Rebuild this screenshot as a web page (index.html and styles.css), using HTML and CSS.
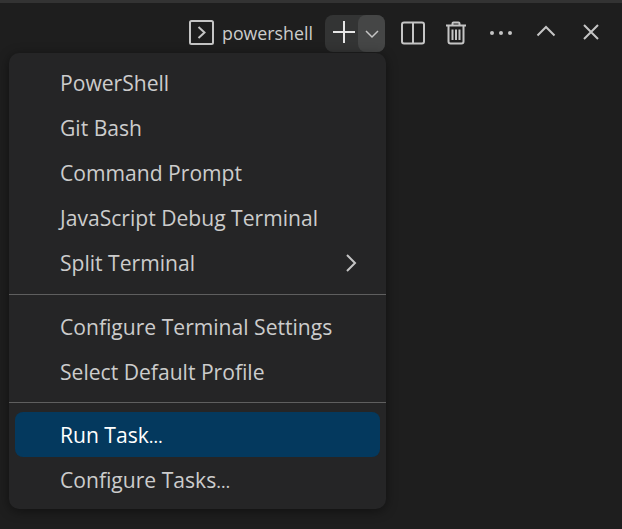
FILE: index.html
```html
<!DOCTYPE html>
<html lang="en">
<head>
<meta charset="utf-8">
<title>Terminal menu</title>
<link rel="stylesheet" href="styles.css">
</head>
<body>
<div class="topline"></div>
<header class="toolbar">
  <svg class="icon term-icon" width="25" height="25" viewBox="0 0 25 25"><rect x="1" y="1" width="23" height="23" rx="1.500"/><path d="M9.500 7l6 5.500-6 5.500"/></svg>
  <span class="profile">powershell</span>
  <div class="add-group">
    <span class="add"><svg class="icon" width="24" height="24" viewBox="0 0 24 24"><path class="bright" d="M12 1v22M1 12h22"/></svg></span>
    <span class="caret"><svg class="icon thin" width="16" height="16" viewBox="0 0 16 16"><path d="M2 5l6 6 6-6"/></svg></span>
  </div>
  <svg class="icon split" width="24" height="24" viewBox="0 0 24 24"><rect x="1" y="1.500" width="22" height="21" rx="2"/><path d="M12 1.500v21"/></svg>
  <svg class="icon trash" width="22" height="24" viewBox="0 0 22 24"><path d="M1 4.500h20M7.500 4.500v-2a1 1 0 0 1 1-1h5a1 1 0 0 1 1 1v2M3.500 4.500v16a2 2 0 0 0 2 2h11a2 2 0 0 0 2-2v-16M7.500 8.500v10.500M11 8.500v10.500M14.500 8.500v10.500"/></svg>
  <svg class="icon more" width="24" height="6" viewBox="0 0 24 6"><circle cx="3" cy="3" r="2"/><circle cx="12" cy="3" r="2"/><circle cx="21" cy="3" r="2"/></svg>
  <svg class="icon up" width="20" height="12" viewBox="0 0 20 12"><path d="M1.500 10.500L10 2l8.500 8.500"/></svg>
  <svg class="icon close" width="18" height="18" viewBox="0 0 18 18"><path d="M2 2l14 14M16 2L2 16"/></svg>
</header>
<nav class="menu">
  <div class="item">PowerShell</div>
  <div class="item">Git Bash</div>
  <div class="item">Command Prompt</div>
  <div class="item">JavaScript Debug Terminal</div>
  <div class="item">Split Terminal<svg class="icon chevron" width="12" height="20" viewBox="0 0 12 20"><path d="M2 2l8 8-8 8"/></svg></div>
  <div class="sep"></div>
  <div class="item">Configure Terminal Settings</div>
  <div class="item">Select Default Profile</div>
  <div class="sep sep-tight"></div>
  <div class="item active"><span>Run Task<span class="ell">…</span></span></div>
  <div class="item"><span>Configure Tasks<span class="ell">…</span></span></div>
</nav>
</body>
</html>
```
FILE: styles.css
```css
* { box-sizing: border-box; }
html, body { margin: 0; height: 100%; }
body {
  width: 622px;
  height: 529px;
  overflow: hidden;
  background: #1e1e1e;
  font-family: "Open Sans", "Noto Sans", sans-serif;
  color: #cccccc;
}
.topline { height: 3px; background: #333333; }
.toolbar {
  display: flex;
  align-items: center;
  height: 50px;
  padding: 9px 0 0 189px;
}
.icon { fill: none; stroke: #c5c5c5; stroke-width: 2; flex: none; display: block; }
.thin { stroke-width: 1.500; }
.profile { font-size: 17.800px; margin-left: 8px; width: 103px; color: #cccccc; }
.add-group { display: flex; height: 37px; margin-top: 2px; background: #333434; border-radius: 8px; width: 60px; }
.add { width: 33px; padding: 0 0 3px 4px; display: flex; align-items: center; justify-content: center; }
.bright { stroke: #e6e6e6; }
.caret { width: 27px; background: #454646; border-radius: 8px; display: flex; align-items: center; justify-content: center; }
.split { margin-left: 16px; }
.trash { margin-left: 20px; }
.more { margin-left: 22px; fill: #c5c5c5; stroke: none; }
.up { margin: 0 0 3px 23px; }
.close { margin: 0 0 1px 26px; }
.menu {
  position: relative;
  width: 377px;
  height: 456px;
  margin-left: 9px;
  padding: 7px 6px;
  background: #252526;
  border-radius: 10px;
  box-shadow: 0 2px 12px rgba(0,0,0,.45);
  display: flex;
  flex-direction: column;
}
.item {
  height: 45px;
  flex: none;
  display: flex;
  align-items: center;
  justify-content: space-between;
  padding: 0 23px 0 45px;
  font-size: 21.100px;
  border-radius: 8px;
}
.item.active { background: #04395e; color: #ffffff; }
.ell { font-size: 18px; }
.sep { height: 1px; background: #5f5f5f; margin: 9px -6px; flex: none; }
.sep-tight { margin-top: 8px; }
```
